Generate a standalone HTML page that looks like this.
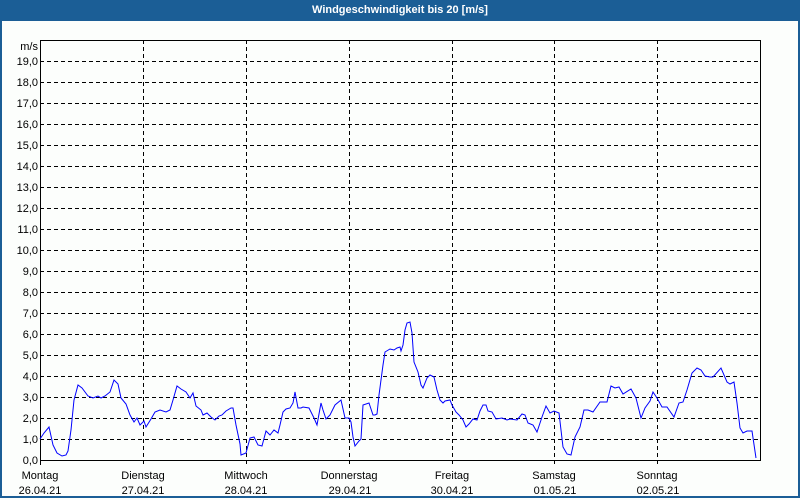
<!DOCTYPE html>
<html><head><style>
body{margin:0;width:800px;height:500px;overflow:hidden;background:#fcfefc;font-family:"Liberation Sans",sans-serif;}
#frame{position:absolute;left:0;top:0;width:796px;height:496px;border:2px solid #1b5e96;border-top:none;}
#title{position:absolute;left:0;top:0;width:800px;height:21px;background:#1b5e96;color:#fff;font-weight:bold;font-size:11px;text-align:center;line-height:20px;}
svg{position:absolute;left:0;top:0}
</style></head><body>
<div id="frame"></div>
<div id="title">Windgeschwindigkeit bis 20 [m/s]</div>
<svg width="800" height="500" font-family="Liberation Sans, sans-serif" font-size="11" fill="#000">
<g stroke="#000" stroke-width="1" stroke-dasharray="4,3" fill="none">
<path d="M40 61.5H760M40 82.5H760M40 103.5H760M40 124.5H760M40 145.5H760M40 166.5H760M40 187.5H760M40 208.5H760M40 229.5H760M40 250.5H760M40 271.5H760M40 292.5H760M40 313.5H760M40 334.5H760M40 355.5H760M40 376.5H760M40 397.5H760M40 418.5H760M40 439.5H760"/>
<path d="M143.5 40V465M246.5 40V465M349.5 40V465M452.5 40V465M554.5 40V465M657.5 40V465"/>
</g>
<path d="M40.5 40V460.5H760.5V40.5H40" stroke="#000" fill="none"/>
<path d="M40.5 460V465" stroke="#000"/>
<polyline fill="none" stroke="#0000ff" stroke-width="1" points="40,439 44,433 49,427 53,445 57,453 62,456 66,455 68,451 71,430 74,400 78,385 82,388 88,396 93,398 98,396 101,398 105,396 110,392 114,380 118,384 121,398 126,404 130,415 134,422 137,418 140,425 144,421 146,427 151,419 155,412 160,410 166,412 170,410 173,400 177,386 181,389 186,392 190,398 193,393 196,406 201,410 203,415 207,413 211,417 215,420 219,416 222,415 226,411 231,408 233,408 236,425 240,444 241,455 246,453 250,438 254,437 258,445 262,446 266,431 270,435 274,430 278,433 280,425 283,412 286,409 290,408 293,403 295,392 298,408 301,408 303,407 309,408 314,418 317,425 321,403 323,410 326,419 330,415 335,405 341,400 345,418 349,418 351,422 353,437 355,446 359,441 361,439 363,405 369,403 373,415 375,415 377,414 379,395 383,365 385,352 390,349 394,350 397,348 400,347 401,351 403,345 405,330 407,323 410,322 412,333 414,362 418,372 421,385 423,388 427,378 430,375 434,377 437,390 440,400 443,403 445,401 450,400 452,405 456,412 459,415 463,420 466,427 469,424 473,419 477,420 480,411 483,405 486,405 488,411 492,412 496,419 502,418 507,420 510,419 517,420 522,414 525,415 528,423 533,425 537,432 542,417 546,406 550,413 554,411 559,413 563,447 567,454 571,455 575,437 580,427 584,410 588,410 593,412 600,402 607,402 611,386 615,388 619,387 623,394 631,389 636,398 641,418 645,408 650,401 653,392 657,398 662,407 667,407 674,417 679,403 683,402 687,390 692,373 697,368 701,370 705,376 710,377 713,377 721,368 727,382 730,384 734,382 737,403 740,428 743,433 747,431 752,431 756,458"/>
<g text-anchor="end">
<text x="38" y="50">m/s</text>
<text x="38" y="65">19,0</text><text x="38" y="86">18,0</text><text x="38" y="107">17,0</text><text x="38" y="128">16,0</text><text x="38" y="149">15,0</text><text x="38" y="170">14,0</text><text x="38" y="191">13,0</text><text x="38" y="212">12,0</text><text x="38" y="233">11,0</text><text x="38" y="254">10,0</text><text x="38" y="275">9,0</text><text x="38" y="296">8,0</text><text x="38" y="317">7,0</text><text x="38" y="338">6,0</text><text x="38" y="359">5,0</text><text x="38" y="380">4,0</text><text x="38" y="401">3,0</text><text x="38" y="422">2,0</text><text x="38" y="443">1,0</text><text x="38" y="464">0,0</text>
</g>
<g text-anchor="middle">
<text x="40" y="479">Montag</text><text x="40" y="494">26.04.21</text>
<text x="143" y="479">Dienstag</text><text x="143" y="494">27.04.21</text>
<text x="246" y="479">Mittwoch</text><text x="246" y="494">28.04.21</text>
<text x="349" y="479">Donnerstag</text><text x="350" y="494">29.04.21</text>
<text x="452" y="479">Freitag</text><text x="452" y="494">30.04.21</text>
<text x="554" y="479">Samstag</text><text x="555" y="494">01.05.21</text>
<text x="657" y="479">Sonntag</text><text x="658" y="494">02.05.21</text>
</g>
</svg>
</body></html>
